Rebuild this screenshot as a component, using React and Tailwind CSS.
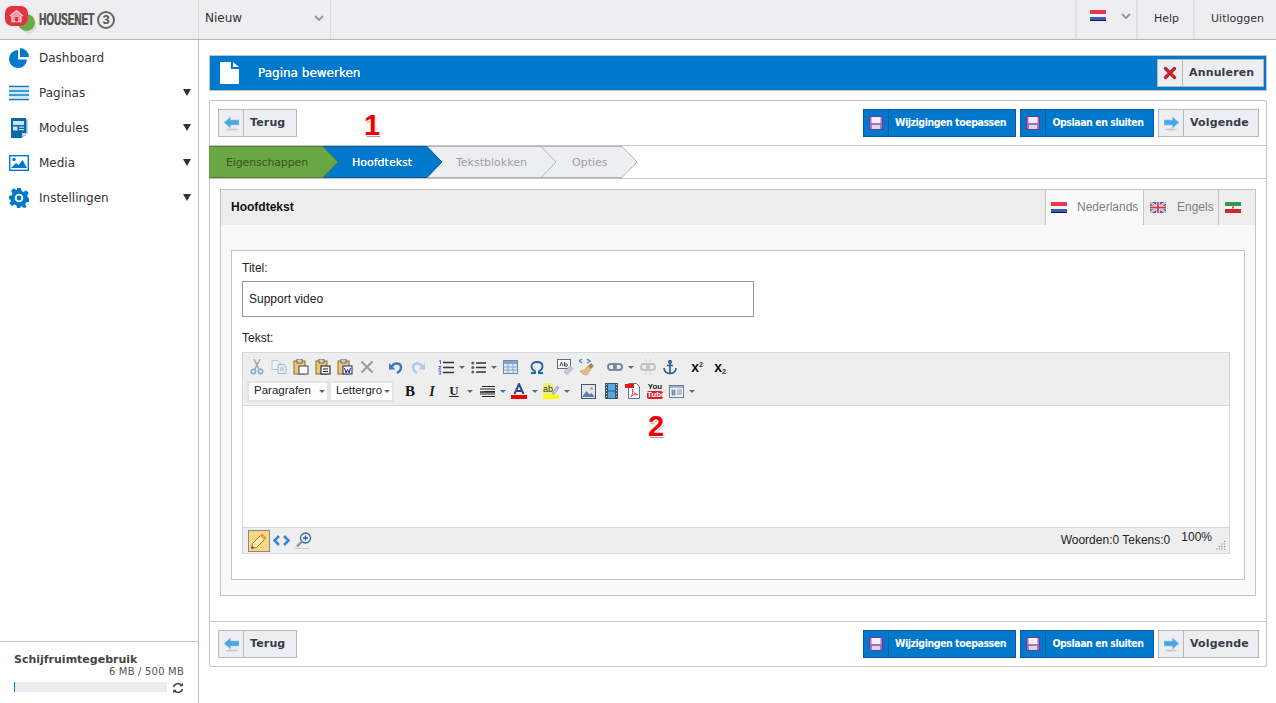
import React from "react";

const VERDANA = "font-['DejaVu_Sans',sans-serif]";
const ARIAL = "font-['Liberation_Sans',Arial,sans-serif]";

const FlagNl = () => (
  <svg width="16" height="11" viewBox="0 0 16 11">
    <rect width="16" height="4" fill="#e8394a" />
    <rect y="4" width="16" height="3" fill="#f4f4f8" />
    <rect y="7" width="16" height="3" fill="#3a5fb0" />
    <rect y="10" width="16" height="1" fill="#101850" />
  </svg>
);

const FlagEn = () => (
  <svg width="16" height="11" viewBox="0 0 16 11">
    <rect width="16" height="11" fill="#4a5fa8" />
    <path d="M0 0 16 11M16 0 0 11" stroke="#fff" strokeWidth="2" />
    <path d="M0 0 16 11M16 0 0 11" stroke="#d9485a" strokeWidth=".7" />
    <path d="M8 0v11M0 5.5h16" stroke="#fff" strokeWidth="3.4" />
    <path d="M8 0v11M0 5.5h16" stroke="#d9384a" strokeWidth="1.8" />
  </svg>
);

const FlagIr = () => (
  <svg width="16" height="11" viewBox="0 0 16 11">
    <rect width="16" height="4" fill="#2f9a4a" />
    <rect y="4" width="16" height="3" fill="#f6f6f6" />
    <rect y="7" width="16" height="4" fill="#d8232a" />
    <rect x="7" y="4.5" width="2" height="2" fill="#c8485a" />
  </svg>
);

const Chevron = () => (
  <svg width="10" height="6" viewBox="0 0 10 6">
    <path d="M1 1l4 4 4-4" fill="none" stroke="#9a9a9a" strokeWidth="2" />
  </svg>
);

const Logo = () => (
  <svg width="32" height="28" viewBox="0 0 32 28">
    <ellipse cx="24" cy="20" rx="7.500" ry="7.500" fill="#dcdcdc" />
    <ellipse cx="21.500" cy="16.500" rx="8.500" ry="8.500" fill="#6cab46" />
    <path d="M7 0h9a7 7 0 0 1 7 7v5a8 8 0 0 1-8 8H7a7 7 0 0 1-7-7V7a7 7 0 0 1 7-7z" fill="#e23340" />
    <path d="M5 10l6.500-5.500 6.500 5.500M7 10v5.500h9V10" fill="#f59aa2" stroke="#fbd0d4" strokeWidth="1.300" />
    <rect x="10" y="11" width="3" height="4.500" fill="#e23340" />
  </svg>
);

const PieIcon = () => (
  <svg width="20" height="20" viewBox="0 0 20 20">
    <path d="M9 2a9 9 0 1 0 9 9.5H9z" fill="#0079cc" />
    <path d="M11 0a9 9 0 0 1 9 9h-9z" fill="#0079cc" />
  </svg>
);

const LinesIcon = () => (
  <svg width="20" height="16" viewBox="0 0 20 16">
    <path d="M0 1.5h20M0 6h20M0 10h20M0 14.5h20" stroke="#0079cc" strokeWidth="1.6" />
    <path d="M0 4h20M0 8h20M0 12h20" stroke="#8cc4ea" strokeWidth=".8" />
  </svg>
);

const ModulesIcon = () => (
  <svg width="18" height="20" viewBox="0 0 18 20">
    <rect x="1" y="0" width="15" height="20" fill="#0a69ad" />
    <rect x="16" y="1" width="1.5" height="15" fill="#7fb4da" />
    <rect x="3" y="3" width="11" height="4" fill="#cfe5f5" />
    <rect x="3" y="8.500" width="4.500" height="4" fill="#cfe5f5" />
    <rect x="9" y="8.500" width="5" height="1.200" fill="#cfe5f5" />
    <rect x="9" y="11" width="5" height="1.200" fill="#cfe5f5" />
    <path d="M12 20l6-5v5z" fill="#fff" />
    <path d="M12 20v-5h6z" fill="#b9d6ea" />
  </svg>
);

const MediaIcon = () => (
  <svg width="20" height="16" viewBox="0 0 20 16">
    <rect x=".7" y=".7" width="18.600" height="14.600" fill="#fff" stroke="#0079cc" strokeWidth="1.400" />
    <circle cx="5" cy="4.500" r="1.700" fill="#0079cc" />
    <path d="M2 13l5-5 2.500 2 4-5 4.500 8z" fill="#0079cc" />
  </svg>
);

const GearIcon = () => (
  <svg width="20" height="20" viewBox="0 0 20 20">
    <path d="M8 0h4l.5 3 2.200.9L17.100 2.200 19.800 5l-1.800 2.400.9 2.100 1.100.5v4l-3 .5-.9 2 1.700 2.400-2.800 1.100-2.400-1.700-2.100.8L12 20H8l-.5-2.500-2.100-.9L3 18 .3 15.300 2 13l-.9-2.100L0 12V8l2.600-.5.9-2.200L2 3l2.700-2.700 2.400 1.700 1-.4z" fill="#0079cc" />
    <circle cx="10" cy="10" r="4.300" fill="#fff" />
    <circle cx="10" cy="10" r="2.400" fill="#0079cc" />
  </svg>
);

const DocIcon = () => (
  <svg width="19" height="22" viewBox="0 0 19 22">
    <path d="M1 0h10v7h8v14a1 1 0 0 1-1 1H1a1 1 0 0 1-1-1V1a1 1 0 0 1 1-1z" fill="#fff" />
    <path d="M13 0l6 5h-6z" fill="#fff" />
  </svg>
);

const CloseIcon = () => (
  <svg width="14" height="14" viewBox="0 0 14 14">
    <path d="M2.500 2.500l9 9M11.500 2.500l-9 9" stroke="#c4222e" strokeWidth="3.400" strokeLinecap="round" />
  </svg>
);

const ArrowLeft = () => (
  <svg width="15" height="15" viewBox="0 0 15 15">
    <ellipse cx="8" cy="13.500" rx="6" ry="1" fill="#c9c9c9" />
    <path d="M0 6.500 6.500 1v3H15v5H6.500v3z" fill="#4ba6e4" stroke="#8cc9f0" strokeWidth=".6" />
  </svg>
);

const ArrowRight = () => (
  <svg width="15" height="15" viewBox="0 0 15 15">
    <ellipse cx="7" cy="13.500" rx="6" ry="1" fill="#c9c9c9" />
    <path d="M15 6.500 8.500 1v3H0v5h8.500v3z" fill="#4ba6e4" stroke="#8cc9f0" strokeWidth=".6" />
  </svg>
);

const SaveIcon = () => (
  <svg width="14" height="14" viewBox="0 0 14 14">
    <rect x=".5" y=".5" width="13" height="13" fill="#a86cc0" stroke="#6a3a94" />
    <rect x="2.500" y="1" width="9" height="6" fill="#f2f2f6" />
    <rect x="3" y="9" width="8" height="4" fill="#d8d8e2" />
  </svg>
);

const RefreshIcon = () => (
  <svg width="12" height="12" viewBox="0 0 12 12" fill="none" stroke="#444" strokeWidth="1.500">
    <path d="M1.500 5A4.500 4.500 0 0 1 9.500 3.500" />
    <path d="M10.500 7A4.500 4.500 0 0 1 2.500 8.500" />
    <path d="M10.800 .8v3.500H7.300M1.200 11.200V7.700h3.500" fill="#444" stroke="none" />
  </svg>
);

// tinymce toolbar icons
const Cut = () => (
  <svg width="14" height="16" viewBox="0 0 14 16" fill="none">
    <path d="M4 0l5 10M10 0L5 10" stroke="#a8a8a8" strokeWidth="1.500" />
    <circle cx="3.500" cy="12.500" r="2.200" stroke="#8aa4d4" strokeWidth="1.500" />
    <circle cx="10.500" cy="12.500" r="2.200" stroke="#8aa4d4" strokeWidth="1.500" />
  </svg>
);

const Copy = () => (
  <svg width="16" height="14" viewBox="0 0 16 14">
    <path d="M1 .5h6l2 2v7H1z" fill="#f0f4fa" stroke="#b4c4dc" />
    <path d="M7 4.500h6l2 2v7H7z" fill="#e4ecf8" stroke="#9cb4d8" />
    <path d="M9 8h4M9 10h4" stroke="#9cb4d8" />
  </svg>
);

const Paste = ({ children }) => (
  <svg width="16" height="16" viewBox="0 0 16 16">
    <rect x="1" y="2" width="11" height="13" fill="#eec870" stroke="#8a6a28" />
    <rect x="4" y="0" width="5" height="4" fill="#d0d0d0" stroke="#555" strokeWidth=".8" />
    {children}
  </svg>
);

const Remove = () => (
  <svg width="14" height="14" viewBox="0 0 14 14">
    <path d="M1.500 1.500l11 11M12.500 1.500l-11 11" stroke="#9a9a9a" strokeWidth="2" />
  </svg>
);

const Undo = ({ flip, faded }) => (
  <svg width="14" height="14" viewBox="0 0 14 14" className={flip ? "-scale-x-100" : ""}>
    <path d="M3 6.500C5 2 12.500 2.500 12 8c-.2 2.500-2 4-4 5" fill="none" stroke={faded ? "#b0c8e8" : "#3f78c8"} strokeWidth="2.400" />
    <path d="M0 3v6.500h6.500z" fill={faded ? "#b0c8e8" : "#3f78c8"} />
  </svg>
);

const NumList = () => (
  <svg width="16" height="15" viewBox="0 0 16 15">
    <path d="M5 2.500h11M5 7.500h11M5 12.500h11" stroke="#333" strokeWidth="1.300" />
    <path d="M1 1l1.500-.5V4M.5 6.500h2.500L.5 9h2.500M.5 11h2.500l-1 1.500 1 1.500H.5" fill="none" stroke="#2a62b8" strokeWidth=".9" />
  </svg>
);

const BulList = () => (
  <svg width="15" height="13" viewBox="0 0 15 13">
    <path d="M5 2h10M5 6.500h10M5 11h10" stroke="#333" strokeWidth="1.300" />
    <circle cx="1.800" cy="2" r="1.500" fill="#4a6488" />
    <circle cx="1.800" cy="6.500" r="1.500" fill="#4a6488" />
    <circle cx="1.800" cy="11" r="1.500" fill="#4a6488" />
  </svg>
);

const Table = () => (
  <svg width="15" height="14" viewBox="0 0 15 14">
    <rect x=".5" y=".5" width="14" height="13" fill="#dce8f6" stroke="#6a8cb4" />
    <rect x="1" y="1" width="13" height="3" fill="#7ea4d0" />
    <path d="M5 4v9M10 4v9M1 7h13M1 10h13" stroke="#8aa8cc" />
  </svg>
);

const Omega = () => (
  <svg width="14" height="13" viewBox="0 0 14 13">
    <path d="M1 12h4V10C2.500 9 1.500 7 1.500 5.200 1.500 2.500 4 1 7 1s5.500 1.500 5.500 4.200C12.500 7 11.500 9 9 10v2h4" fill="none" stroke="#1f62b0" strokeWidth="1.800" />
  </svg>
);

const Spell = () => (
  <svg width="17" height="16" viewBox="0 0 17 16">
    <rect x=".5" y=".5" width="13" height="9" fill="#f4f6fa" stroke="#58708c" />
    <path d="M3 7l1.500-4L6 7M7.500 3v4h2a1 1 0 0 0 0-2h-2" fill="none" stroke="#333" strokeWidth=".9" />
    <path d="M7 13l6-6 3 2.500-6 6z" fill="#c4ccd8" stroke="#8a98ac" strokeWidth=".6" />
  </svg>
);

const Clean = () => (
  <svg width="18" height="18" viewBox="0 0 18 18">
    <path d="M3 1L0 3l3 2M8 1l3 2-3 2" fill="none" stroke="#3a86d8" strokeWidth="1.400" />
    <path d="M9 8l3-3 3 3-3 3z" fill="#a88848" />
    <path d="M9 8l3 3-4 6c-2 0-5-1-7-4 3 0 6-2 8-5z" fill="#e0c078" stroke="#a88848" strokeWidth=".5" />
  </svg>
);

const Link = ({ faded }) => (
  <svg width="16" height="10" viewBox="0 0 16 10" fill="none" stroke={faded ? "#bcc4cc" : "#7488a0"} strokeWidth="2">
    <rect x="1" y="2" width="8" height="6" rx="3" />
    <rect x="7" y="2" width="8" height="6" rx="3" />
  </svg>
);

const Unlink = () => (
  <svg width="16" height="16" viewBox="0 0 16 16" fill="none" stroke="#c4ccd4">
    <g transform="translate(0 3)"><Link faded /></g>
    <path d="M5 0l1.500 3M11 0L9.500 3M5 16l1.500-3M11 16l-1.500-3" />
  </svg>
);

const Anchor = () => (
  <svg width="14" height="15" viewBox="0 0 14 15" fill="none" stroke="#2a5c90" strokeWidth="1.600">
    <circle cx="7" cy="2" r="1.300" />
    <path d="M7 3v11M4 5.500h6M1 8c0 3.500 3 5.500 6 5.500s6-2 6-5.500" />
  </svg>
);

const ScriptIcon = ({ sub }) => (
  <span className={`${ARIAL} text-[14px] font-bold text-[#111] leading-none`}>
    x
    <span className={`text-[7px] text-[#333] ${sub ? "align-[-2px]" : "align-[5px]"}`}>2</span>
  </span>
);

const AlignJust = () => (
  <svg width="15" height="13" viewBox="0 0 15 13">
    <path d="M2 1.500h13M0 4h15M4 6.500h11M0 9h15M2 11.500h13" stroke="#222" strokeWidth="1.200" />
    <path d="M0 7h15" stroke="#222" strokeWidth="1.500" />
  </svg>
);

const ColorA = () => (
  <svg width="16" height="16" viewBox="0 0 16 16">
    <path d="M3.500 11L8 1l4.500 10M5.500 8h5" fill="none" stroke="#2a4a88" strokeWidth="2" />
    <rect y="12" width="16" height="4" fill="#f00000" />
  </svg>
);

const Highlight = () => (
  <svg width="16" height="16" viewBox="0 0 16 16">
    <rect width="10" height="12" fill="#f0ee78" />
    <text x="0" y="9" fontSize="9" fontFamily="Liberation Sans" fill="#333">ab</text>
    <path d="M9 10l5-7 2 1.500-5 7z" fill="#c4ccd8" stroke="#7a8aa0" strokeWidth=".6" />
    <rect y="12" width="16" height="4" fill="#ffff00" />
  </svg>
);

const Picture = () => (
  <svg width="15" height="15" viewBox="0 0 15 15">
    <rect x=".5" y=".5" width="14" height="14" fill="#dbe8f8" stroke="#44556e" />
    <circle cx="10.500" cy="4.500" r="1.500" fill="#e89848" />
    <path d="M1 13l4.500-6 3 3.500 2-1.500 3.500 4z" fill="#5c7ea8" />
  </svg>
);

const Film = () => (
  <svg width="13" height="16" viewBox="0 0 13 16">
    <rect width="13" height="16" fill="#3e5268" />
    <rect x="3" y="1" width="7" height="6.500" fill="#58a8e4" />
    <rect x="3" y="8.500" width="7" height="6.500" fill="#58a8e4" />
    <path d="M1 1.500h1M1 4.500h1M1 7.500h1M1 10.500h1M1 13.500h1M11 1.500h1M11 4.500h1M11 7.500h1M11 10.500h1M11 13.500h1" stroke="#c8d4e0" />
  </svg>
);

const Pdf = () => (
  <svg width="16" height="16" viewBox="0 0 16 16">
    <path d="M3.500.5h8l3 3v12h-11z" fill="#fff" stroke="#4a74ac" />
    <rect x="0" y="1" width="9" height="4" fill="#e81820" />
    <path d="M6 14c2-3 2-6 1.500-8C7 8 9.500 11 13 11.500 10 11 7 12 6 14z" fill="none" stroke="#e04048" />
  </svg>
);

const YouTube = () => (
  <div className={`${ARIAL} flex w-[16px] flex-col items-center font-bold leading-none`}>
    <span className="text-[8px] text-[#222]">You</span>
    <span className="w-full rounded-[2px] bg-[#e02028] text-center text-[8px] text-white">Tube</span>
  </div>
);

const Template = () => (
  <svg width="15" height="13" viewBox="0 0 15 13">
    <rect x=".5" y=".5" width="14" height="12" fill="#f4f6fa" stroke="#6d7f98" />
    <rect x="1" y="1" width="13" height="2" fill="#9fb0c8" />
    <rect x="2.500" y="4.500" width="4" height="6" fill="#7c94b8" />
    <path d="M8 5h5M8 7h5M8 9h5" stroke="#7c8ca4" />
  </svg>
);

const Pencil = () => (
  <svg width="18" height="18" viewBox="0 0 18 18">
    <path d="M1.500 16.500l1-5L12 2l4 4-9.500 9.500z" fill="#fbe9b0" stroke="#a87c30" />
    <path d="M12 2l4 4-2 2-4-4z" fill="#e8a850" />
    <path d="M1.500 16.500l.6-3 2.400 2.400z" fill="#555" />
  </svg>
);

const Code = () => (
  <svg width="17" height="11" viewBox="0 0 17 11">
    <path d="M6 1L1.500 5.500 6 10M11 1l4.500 4.500L11 10" fill="none" stroke="#3c86d0" strokeWidth="2.600" />
  </svg>
);

const Zoom = () => (
  <svg width="17" height="17" viewBox="0 0 17 17">
    <circle cx="10.500" cy="6" r="5" fill="#f4f8fc" stroke="#3a68a8" strokeWidth="1.300" />
    <path d="M8 6h5M10.500 3.500v5" stroke="#2a58a0" strokeWidth="1.300" />
    <path d="M7 9.500L2 14.500" stroke="#8a8a8a" strokeWidth="2" />
    <path d="M0 16.500h14" stroke="#ccc" />
  </svg>
);

const Tool = ({ className = "", children }) => (
  <div className={`flex h-[22px] w-[22px] shrink-0 items-center justify-center ${className}`}>{children}</div>
);

const Caret = ({ className = "" }) => (
  <div className={`flex h-[22px] w-[10px] shrink-0 items-center justify-center ${className}`}>
    <div className="h-0 w-0 border-x-[3px] border-t-[3px] border-x-transparent border-t-[#4a6a94]" />
  </div>
);

const EditorSelect = ({ label, width }) => (
  <div className={`${ARIAL} ${width} flex h-[21px] shrink-0 items-center justify-between border-2 border-[#e4e4e4] bg-white pl-[5px] pr-[2px] text-[11.5px] text-[#222]`}>
    <span className="whitespace-nowrap">{label}</span>
    <div className="h-0 w-0 shrink-0 border-x-[3px] border-t-[3px] border-x-transparent border-t-[#4a6a94]" />
  </div>
);

const ActionButton = ({ icon, label, width }) => (
  <button className={`${VERDANA} ${width} flex h-[28px] items-stretch border border-[#b8b8b8] bg-[#edeef1] text-[11px] font-bold text-[#3a3a4a]`}>
    <span className="flex w-[25px] shrink-0 items-center justify-center border-r border-[#b8b8b8]">{icon}</span>
    <span className="flex flex-1 items-center pl-[6px] tracking-[0.15px]">{label}</span>
  </button>
);

const SaveButton = ({ label, width }) => (
  <button className={`${width} flex h-[28px] items-stretch border border-[#0a5c9c] bg-[#0079cc] font-bold text-white`}>
    <span className="flex w-[25px] shrink-0 items-center justify-center border-r border-[#0a5c9c]"><SaveIcon /></span>
    <span className="flex flex-1 items-center justify-center whitespace-nowrap pr-[3px] font-['DejaVu_Sans_Condensed','DejaVu_Sans',sans-serif] text-[10.5px] tracking-[-0.45px]">{label}</span>
  </button>
);

const ButtonRow = ({ className = "", children }) => (
  <div className={`relative flex h-[45px] items-center pl-[8px] pr-[7px] ${className}`}>
    <ActionButton icon={<ArrowLeft />} label="Terug" width="w-[79px]" />
    {children}
    <div className="ml-auto flex gap-[4px]">
      <SaveButton label="Wijzigingen toepassen" width="w-[153px]" />
      <SaveButton label="Opslaan en sluiten" width="w-[134px]" />
      <ActionButton icon={<ArrowRight />} label="Volgende" width="w-[101px]" />
    </div>
  </div>
);

const Step = ({ label, width, fill, stroke, text, textLeft, z }) => (
  <div className={`relative h-[32px] ${width} ${z} shrink-0`}>
    <svg className="absolute left-0 top-0 overflow-visible" width="100%" height="32">
      <path
        d={`M0 .5H${label.w}L${label.w + 15} 16 ${label.w} 31.500H0`}
        fill={fill}
        stroke={stroke}
        strokeWidth="1"
      />
    </svg>
    <span className={`${VERDANA} ${text} ${textLeft} absolute top-[9px] text-[11px] whitespace-nowrap`}>{label.t}</span>
  </div>
);

const StepBar = () => (
  <div className="flex h-[33px] border-b border-[#c4c4c4]">
    <div className="-ml-[1px] flex">
      <Step label={{ t: "Eigenschappen", w: 114 }} width="w-[114px]" fill="#6aa644" stroke="#4e7c34" text="text-[#35561f] tracking-[-0.15px]" textLeft="left-[17px]" z="z-40" />
      <Step label={{ t: "Hoofdtekst", w: 104 }} width="w-[104px]" fill="#0079cc" stroke="#0a5c9c" text="text-white [text-shadow:0_0_0.6px_#fff]" textLeft="left-[29px]" z="z-30" />
      <Step label={{ t: "Tekstblokken", w: 114 }} width="w-[114px]" fill="#edeef1" stroke="#b4b4b4" text="text-[#a0a0a0]" textLeft="left-[29px]" z="z-20" />
      <Step label={{ t: "Opties", w: 81 }} width="w-[81px]" fill="#edeef1" stroke="#b4b4b4" text="text-[#a0a0a0]" textLeft="left-[31px]" z="z-10" />
    </div>
  </div>
);

const Annotation = ({ className = "", children }) => (
  <span className={`${ARIAL} absolute z-50 text-[29px] leading-none font-bold text-[#f00000] [text-shadow:-1px_-1px_0_#fff,1px_1px_0_#fff,1px_2px_1px_#999] ${className}`}>
    {children}
  </span>
);

const Editor = () => (
  <div className="relative h-[202px] border border-[#d8d8d8] bg-white">
    <div className="h-[53px] border-b border-[#d8d8d8] bg-[#eeeeee] pl-[4px] pt-[3px]">
      <div className="-ml-[1px] flex h-[22px] items-center">
        <Tool><Cut /></Tool>
        <Tool><Copy /></Tool>
        <Tool><Paste><rect x="6" y="7" width="9" height="8" fill="#fff" stroke="#444" /></Paste></Tool>
        <Tool><Paste><rect x="6" y="7" width="9" height="8" fill="#fff" stroke="#111" /><path d="M8 10h5M8 12.500h5" stroke="#111" /></Paste></Tool>
        <Tool><Paste><rect x="6" y="7" width="9" height="8" fill="#fff" stroke="#16208c" /><path d="M7.500 9l1.500 5 1.500-3.500 1.500 3.500 1.500-5" fill="none" stroke="#16208c" /></Paste></Tool>
        <Tool><Remove /></Tool>
        <Tool className="ml-[7px]"><Undo /></Tool>
        <Tool><Undo flip faded /></Tool>
        <Tool className="ml-[6px]"><NumList /></Tool>
        <Caret />
        <Tool><BulList /></Tool>
        <Caret />
        <Tool><Table /></Tool>
        <Tool className="ml-[5px]"><Omega /></Tool>
        <Tool className="ml-[6px]"><Spell /></Tool>
        <Tool className="ml-[1px]"><Clean /></Tool>
        <Tool className="ml-[5px]"><Link /></Tool>
        <Caret />
        <Tool className="ml-[1px]"><Unlink /></Tool>
        <Tool><Anchor /></Tool>
        <Tool className="ml-[5px]"><ScriptIcon /></Tool>
        <Tool className="ml-[1px]"><ScriptIcon sub /></Tool>
      </div>
      <div className="mt-[2px] flex h-[22px] items-center">
        <EditorSelect label="Paragrafen" width="w-[82px]" />
        <EditorSelect label="Lettergro" width="w-[65px]" />
        <Tool className="ml-[5px]"><span className="font-['Liberation_Serif',serif] text-[15px] font-bold text-[#111]">B</span></Tool>
        <Tool><span className="font-['Liberation_Serif',serif] text-[14px] font-bold italic text-[#222]">I</span></Tool>
        <Tool><span className="font-['Liberation_Serif',serif] text-[13px] font-bold text-[#222] underline">U</span></Tool>
        <Caret />
        <Tool className="ml-[1px]"><AlignJust /></Tool>
        <Caret />
        <Tool><ColorA /></Tool>
        <Caret />
        <Tool><Highlight /></Tool>
        <Caret />
        <Tool className="ml-[5px]"><Picture /></Tool>
        <Tool className="ml-[1px]"><Film /></Tool>
        <Tool><Pdf /></Tool>
        <Tool><YouTube /></Tool>
        <Tool className="-ml-[1px]"><Template /></Tool>
        <Caret />
      </div>
    </div>
    <Annotation className="left-[405px] top-[59px]">2</Annotation>
    <div className="h-[121px]" />
    <div className={`${ARIAL} flex h-[26px] items-center border-t border-[#d8d8d8] bg-[#eeeeee] pl-[5px] pr-[3px] text-[12px] text-[#222]`}>
      <div className="flex h-[22px] w-[22px] items-center justify-center border border-[#888] bg-[#fbd785]"><Pencil /></div>
      <Tool><Code /></Tool>
      <Tool><Zoom /></Tool>
      <span className="mb-[2px] ml-auto">Woorden:0 Tekens:0</span>
      <span className="mb-[8px] ml-[11px]">100%</span>
      <svg className="ml-[4px] mt-[8px]" width="10" height="10" viewBox="0 0 10 10">
        <path d="M8.500 1v1M6 3.500v1M8.500 3.500v1M3.500 6v1M6 6v1M8.500 6v1M1 8.500v1M3.500 8.500v1M6 8.500v1M8.500 8.500v1" stroke="#6a8aa8" strokeWidth="1.200" />
      </svg>
    </div>
  </div>
);

const TextPanel = () => (
  <div className="mx-[10px] mt-[10px] border border-[#c4c4c4] bg-[#f9f9f9]">
    <div className={`${ARIAL} flex h-[35px] items-stretch bg-[#ededed]`}>
      <span className="flex items-center pb-[2px] pl-[10px] text-[12px] font-bold text-[#111]">Hoofdtekst</span>
      <div className="ml-auto flex text-[12px] text-[#808080]">
        <div className="flex w-[98px] items-center border-l border-[#c4c4c4] bg-[#f9f9f9] pl-[5px]">
          <FlagNl /><span className="mb-[2px] ml-[10px]">Nederlands</span>
        </div>
        <div className="flex w-[75px] items-center border-l border-[#c4c4c4] pl-[6px]">
          <FlagEn /><span className="mb-[2px] ml-[11px]">Engels</span>
        </div>
        <div className="flex w-[37px] items-center border-l border-[#c4c4c4] pl-[6px]">
          <FlagIr />
        </div>
      </div>
    </div>
    <div className="px-[10px] pb-[15px] pt-[25px]">
      <div className={`${ARIAL} h-[330px] border border-[#c4c4c4] bg-white pl-[10px] pr-[14px] pt-[10px] text-[12px] text-[#222]`}>
        <label className="block h-[14px] leading-[14px]">Titel:</label>
        <div className="mt-[6px] flex h-[36px] w-[512px] items-center border border-[#999] pl-[6px]">Support video</div>
        <label className="mt-[14px] block h-[14px] leading-[14px]">Tekst:</label>
        <div className="mt-[7px]"><Editor /></div>
      </div>
    </div>
  </div>
);

const SideItem = ({ icon, label, arrow = true }) => (
  <div className="flex h-[35px] items-center">
    <span className="flex w-[39px] shrink-0 justify-center pr-[1px]">{icon}</span>
    <span className="text-[12px] text-[#333]">{label}</span>
    {arrow && <span className="ml-auto mr-[7px] h-0 w-0 border-x-[4px] border-t-[7px] border-x-transparent border-t-[#333]" />}
  </div>
);

const Sidebar = () => (
  <aside className={`${VERDANA} flex w-[199px] shrink-0 flex-col border-r border-[#b4b8c6]`}>
    <nav>
      <SideItem icon={<PieIcon />} label="Dashboard" arrow={false} />
      <SideItem icon={<LinesIcon />} label="Paginas" />
      <SideItem icon={<ModulesIcon />} label="Modules" />
      <SideItem icon={<MediaIcon />} label="Media" />
      <SideItem icon={<GearIcon />} label="Instellingen" />
    </nav>
    <div className="mt-auto h-[62px] border-t border-[#c0c4d0] pl-[14px] pr-[14px] pt-[11px]">
      <div className="text-[11px] font-bold leading-[13px] text-[#444]">Schijfruimtegebruik</div>
      <div className="text-right text-[10px] leading-[12px] tracking-[0.2px] text-[#555]">6 MB / 500 MB</div>
      <div className="mt-[1px] flex items-center">
        <div className="h-[10px] w-[153px] border-l border-[#0079cc] bg-[#ebecf0]" />
        <span className="ml-[5px] mt-[3px]"><RefreshIcon /></span>
      </div>
    </div>
  </aside>
);

const TopBar = () => (
  <header className={`${VERDANA} flex h-[40px] shrink-0 items-stretch border-b border-[#b4b8c6] bg-[#eeeef0] text-[11px] text-[#333]`}>
    <div className="flex w-[199px] items-center border-r border-[#dcdce0] pl-[5px]">
      <Logo />
      <span className="ml-[2px] w-[56px] origin-left scale-x-[0.62] whitespace-nowrap font-['Liberation_Sans',sans-serif] text-[16px] font-bold text-[#555] [text-shadow:0.5px_0_0_#555]">HOUSENET</span>
      <span className="ml-[2px] flex h-[18px] w-[18px] items-center justify-center rounded-full border-2 border-[#666] font-['Liberation_Sans',sans-serif] text-[13px] font-bold text-[#555]">3</span>
    </div>
    <div className="flex w-[132px] items-center justify-between border-r border-[#dcdce0] pb-[4px] pl-[6px] pr-[6px] text-[12px]">
      Nieuw
      <Chevron />
    </div>
    <div className="ml-auto flex w-[63px] items-center gap-[15px] border-x-2 border-[#e0e0e2] pb-[8px] pl-[13px]">
      <FlagNl />
      <Chevron />
    </div>
    <div className="flex w-[57px] items-center justify-center border-r-2 border-[#e0e0e2] pl-[2px]">Help</div>
    <div className="flex w-[81px] items-center justify-center pl-[4px]">Uitloggen</div>
  </header>
);

export default function App() {
  return (
    <div className="flex h-[703px] w-[1276px] flex-col overflow-hidden bg-white">
      <TopBar />
      <div className="flex min-h-0 flex-1">
        <Sidebar />
        <main className="flex-1 pl-[10px] pr-[9px] pt-[15px]">
          <div className="flex h-[36px] items-center border border-[#b8c4d0] bg-[#0079cc] pl-[10px] pr-[2px]">
            <DocIcon />
            <span className={`${VERDANA} ml-[19px] text-[12px] text-white [text-shadow:0_0_0.5px_#fff]`}>Pagina bewerken</span>
            <div className="ml-auto"><ActionButton icon={<CloseIcon />} label="Annuleren" width="w-[107px]" /></div>
          </div>
          <div className="mt-[9px] h-[567px] rounded-[2px] border border-[#c4c4c4]">
            <ButtonRow className="border-b border-[#c4c4c4]">
              <Annotation className="left-[154px] top-[10px]">1</Annotation>
            </ButtonRow>
            <StepBar />
            <TextPanel />
            <ButtonRow className="mt-[25px] border-t border-[#c4c4c4]" />
          </div>
        </main>
      </div>
    </div>
  );
}
